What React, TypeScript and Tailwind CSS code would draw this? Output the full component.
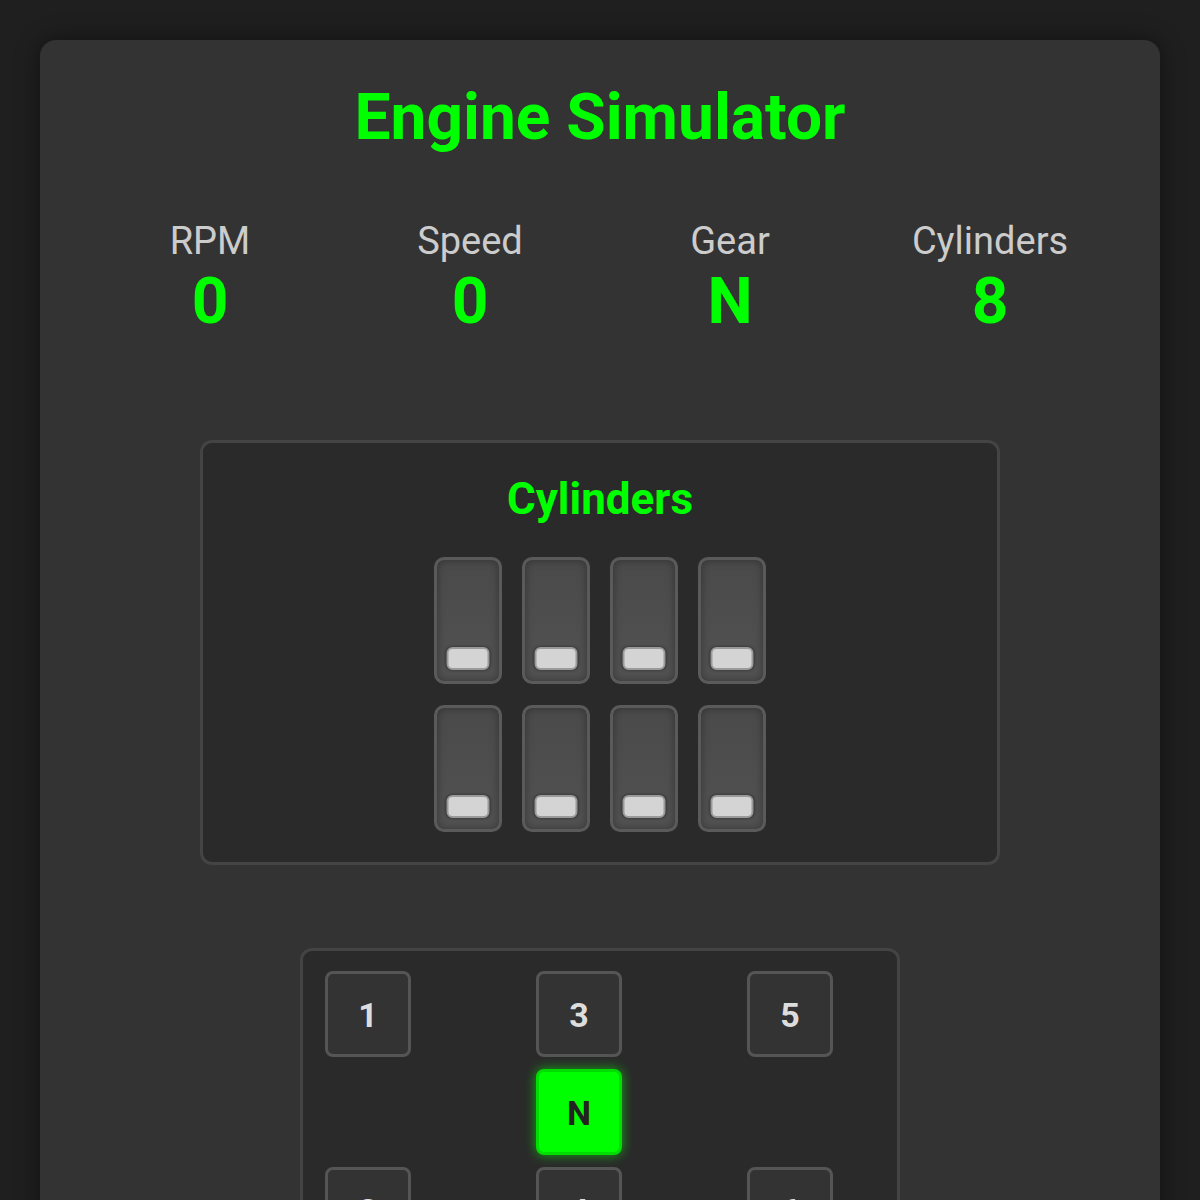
import { useState } from 'react';

const stats = [
    { label: 'RPM', value: '0' },
    { label: 'Speed', value: '0' },
    { label: 'Gear', value: 'N' },
    { label: 'Cylinders', value: '8' },
];

// H-pattern layout: null = empty cell
const gearGrid: (string | null)[] = ['1', '3', '5', null, 'N', null, '2', '4', '6'];

function Cylinder() {
    return (
        <div className="relative w-[68px] h-[127px] rounded-[10px] border-[3px] border-[#5a5a5a] bg-gradient-to-b from-[#4a4a4a] to-[#525252] shadow-[inset_0_0_8px_rgba(0,0,0,0.35)]">
            <div className="absolute left-1/2 -translate-x-1/2 bottom-[11px] w-[43px] h-[23px] rounded-[6px] bg-[#d4d4d4] border-2 border-[#9a9a9a] shadow-[0_0_3px_rgba(0,0,0,0.5)]" />
        </div>
    );
}

export default function App() {
    const [gear, setGear] = useState('N');

    return (
        <div className="min-h-screen bg-[#1f1f1f] p-10 font-['Roboto','Liberation_Sans',sans-serif]">
            <div className="rounded-2xl bg-[#333333] shadow-[0_0_24px_rgba(0,0,0,0.45)] px-10 pt-10 pb-10">
                <h1 className="text-center text-[64px] leading-[1.2] font-bold text-[#00ff00]">Engine Simulator</h1>

                {/* Stats */}
                <div className="grid grid-cols-4 mt-[62px]">
                    {stats.map((s) => (
                        <div key={s.label} className="flex flex-col items-center">
                            <div className="text-[38px] leading-[1.2] text-[#cccccc]">{s.label}</div>
                            <div className="text-[64px] leading-[1.2] font-bold text-[#00ff00]">{s.value}</div>
                        </div>
                    ))}
                </div>

                {/* Cylinders */}
                <div className="mx-auto mt-[99px] w-[800px] rounded-xl border-[3px] border-[#444444] bg-[#2a2a2a] pt-[30px] pb-[30px]">
                    <h2 className="text-center text-[44px] leading-[1.2] font-bold text-[#00ff00]">Cylinders</h2>
                    <div className="mt-[31px] mx-auto grid w-fit grid-cols-[repeat(4,68px)] gap-x-5 gap-y-[21px]">
                        {Array.from({ length: 8 }).map((_, i) => (
                            <Cylinder key={i} />
                        ))}
                    </div>
                </div>

                {/* Gear shifter */}
                <div className="mx-auto mt-[83px] w-[600px] rounded-xl border-[3px] border-[#444444] bg-[#2a2a2a] py-5 pl-[22px] pr-5">
                    <div className="grid grid-cols-[repeat(3,130px)] gap-x-[81px] gap-y-3">
                        {gearGrid.map((g, i) =>
                            g === null ? (
                                <div key={i} className="w-[86px] h-[86px]" />
                            ) : (
                                <button
                                    key={i}
                                    onClick={() => setGear(g)}
                                    className={`w-[86px] h-[86px] rounded-lg border-[3px] flex items-center justify-center pt-[3px] text-[34px] font-bold ${
                                        gear === g
                                            ? 'bg-[#00ff00] border-[#00dd00] text-[#222222] shadow-[0_0_12px_rgba(0,255,0,0.6)]'
                                            : 'bg-[#333333] border-[#555555] text-[#dddddd]'
                                    }`}
                                >
                                    {g}
                                </button>
                            )
                        )}
                    </div>
                </div>
            </div>
        </div>
    );
}
